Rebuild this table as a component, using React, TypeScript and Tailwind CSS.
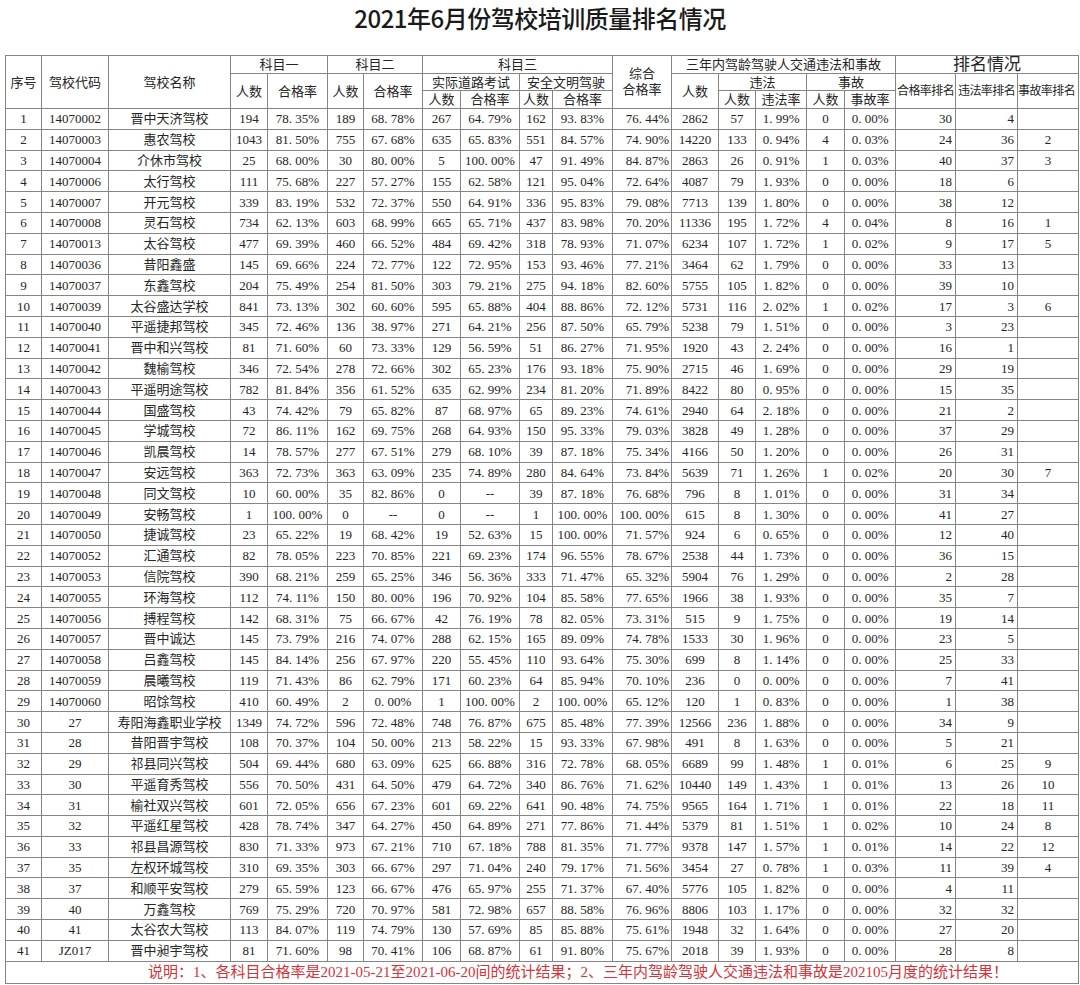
import React from "react";

const raw = `1 14070002 晋中天济驾校 194 78.35% 189 68.78% 267 64.79% 162 93.83% 76.44% 2862 57 1.99% 0 0.00% 30 4 _
2 14070003 惠农驾校 1043 81.50% 755 67.68% 635 65.83% 551 84.57% 74.90% 14220 133 0.94% 4 0.03% 24 36 2
3 14070004 介休市驾校 25 68.00% 30 80.00% 5 100.00% 47 91.49% 84.87% 2863 26 0.91% 1 0.03% 40 37 3
4 14070006 太行驾校 111 75.68% 227 57.27% 155 62.58% 121 95.04% 72.64% 4087 79 1.93% 0 0.00% 18 6 _
5 14070007 开元驾校 339 83.19% 532 72.37% 550 64.91% 336 95.83% 79.08% 7713 139 1.80% 0 0.00% 38 12 _
6 14070008 灵石驾校 734 62.13% 603 68.99% 665 65.71% 437 83.98% 70.20% 11336 195 1.72% 4 0.04% 8 16 1
7 14070013 太谷驾校 477 69.39% 460 66.52% 484 69.42% 318 78.93% 71.07% 6234 107 1.72% 1 0.02% 9 17 5
8 14070036 昔阳鑫盛 145 69.66% 224 72.77% 122 72.95% 153 93.46% 77.21% 3464 62 1.79% 0 0.00% 33 13 _
9 14070037 东鑫驾校 204 75.49% 254 81.50% 303 79.21% 275 94.18% 82.60% 5755 105 1.82% 0 0.00% 39 10 _
10 14070039 太谷盛达学校 841 73.13% 302 60.60% 595 65.88% 404 88.86% 72.12% 5731 116 2.02% 1 0.02% 17 3 6
11 14070040 平遥捷邦驾校 345 72.46% 136 38.97% 271 64.21% 256 87.50% 65.79% 5238 79 1.51% 0 0.00% 3 23 _
12 14070041 晋中和兴驾校 81 71.60% 60 73.33% 129 56.59% 51 86.27% 71.95% 1920 43 2.24% 0 0.00% 16 1 _
13 14070042 魏榆驾校 346 72.54% 278 72.66% 302 65.23% 176 93.18% 75.90% 2715 46 1.69% 0 0.00% 29 19 _
14 14070043 平遥明途驾校 782 81.84% 356 61.52% 635 62.99% 234 81.20% 71.89% 8422 80 0.95% 0 0.00% 15 35 _
15 14070044 国盛驾校 43 74.42% 79 65.82% 87 68.97% 65 89.23% 74.61% 2940 64 2.18% 0 0.00% 21 2 _
16 14070045 学城驾校 72 86.11% 162 69.75% 268 64.93% 150 95.33% 79.03% 3828 49 1.28% 0 0.00% 37 29 _
17 14070046 凯晨驾校 14 78.57% 277 67.51% 279 68.10% 39 87.18% 75.34% 4166 50 1.20% 0 0.00% 26 31 _
18 14070047 安远驾校 363 72.73% 363 63.09% 235 74.89% 280 84.64% 73.84% 5639 71 1.26% 1 0.02% 20 30 7
19 14070048 同文驾校 10 60.00% 35 82.86% 0 -- 39 87.18% 76.68% 796 8 1.01% 0 0.00% 31 34 _
20 14070049 安畅驾校 1 100.00% 0 -- 0 -- 1 100.00% 100.00% 615 8 1.30% 0 0.00% 41 27 _
21 14070050 捷诚驾校 23 65.22% 19 68.42% 19 52.63% 15 100.00% 71.57% 924 6 0.65% 0 0.00% 12 40 _
22 14070052 汇通驾校 82 78.05% 223 70.85% 221 69.23% 174 96.55% 78.67% 2538 44 1.73% 0 0.00% 36 15 _
23 14070053 信院驾校 390 68.21% 259 65.25% 346 56.36% 333 71.47% 65.32% 5904 76 1.29% 0 0.00% 2 28 _
24 14070055 环海驾校 112 74.11% 150 80.00% 196 70.92% 104 85.58% 77.65% 1966 38 1.93% 0 0.00% 35 7 _
25 14070056 搏程驾校 142 68.31% 75 66.67% 42 76.19% 78 82.05% 73.31% 515 9 1.75% 0 0.00% 19 14 _
26 14070057 晋中诚达 145 73.79% 216 74.07% 288 62.15% 165 89.09% 74.78% 1533 30 1.96% 0 0.00% 23 5 _
27 14070058 吕鑫驾校 145 84.14% 256 67.97% 220 55.45% 110 93.64% 75.30% 699 8 1.14% 0 0.00% 25 33 _
28 14070059 晨曦驾校 119 71.43% 86 62.79% 171 60.23% 64 85.94% 70.10% 236 0 0.00% 0 0.00% 7 41 _
29 14070060 昭馀驾校 410 60.49% 2 0.00% 1 100.00% 2 100.00% 65.12% 120 1 0.83% 0 0.00% 1 38 _
30 27 寿阳海鑫职业学校 1349 74.72% 596 72.48% 748 76.87% 675 85.48% 77.39% 12566 236 1.88% 0 0.00% 34 9 _
31 28 昔阳晋宇驾校 108 70.37% 104 50.00% 213 58.22% 15 93.33% 67.98% 491 8 1.63% 0 0.00% 5 21 _
32 29 祁县同兴驾校 504 69.44% 680 63.09% 625 66.88% 316 72.78% 68.05% 6689 99 1.48% 1 0.01% 6 25 9
33 30 平遥育秀驾校 556 70.50% 431 64.50% 479 64.72% 340 86.76% 71.62% 10440 149 1.43% 1 0.01% 13 26 10
34 31 榆社双兴驾校 601 72.05% 656 67.23% 601 69.22% 641 90.48% 74.75% 9565 164 1.71% 1 0.01% 22 18 11
35 32 平遥红星驾校 428 78.74% 347 64.27% 450 64.89% 271 77.86% 71.44% 5379 81 1.51% 1 0.02% 10 24 8
36 33 祁县昌源驾校 830 71.33% 973 67.21% 710 67.18% 788 81.35% 71.77% 9378 147 1.57% 1 0.01% 14 22 12
37 35 左权环城驾校 310 69.35% 303 66.67% 297 71.04% 240 79.17% 71.56% 3454 27 0.78% 1 0.03% 11 39 4
38 37 和顺平安驾校 279 65.59% 123 66.67% 476 65.97% 255 71.37% 67.40% 5776 105 1.82% 0 0.00% 4 11 _
39 40 万鑫驾校 769 75.29% 720 70.97% 581 72.98% 657 88.58% 76.96% 8806 103 1.17% 0 0.00% 32 32 _
40 41 太谷农大驾校 113 84.07% 119 74.79% 130 57.69% 85 85.88% 75.61% 1948 32 1.64% 0 0.00% 27 20 _
41 JZ017 晋中昶宇驾校 81 71.60% 98 70.41% 106 68.87% 61 91.80% 75.67% 2018 39 1.93% 0 0.00% 28 8 _`;

const rows = raw.split("\n").map((l) => l.trim().split(/\s+/).map((c) => (c === "_" ? "" : c)));

const widths = [36, 67, 122, 37, 60, 36, 59, 38, 59, 33, 60, 59, 47, 37, 51, 38, 51, 60, 62, 61];

const fmt = (s: string) => s.replace(/\./, ". ");

const td = "border border-[#858585] p-0 whitespace-nowrap overflow-hidden";

export default function App() {
  return (
    <div
      className="w-[1080px] h-[985px] bg-white text-[#252525] overflow-hidden"
      style={{ fontFamily: '"Liberation Serif", "Noto Sans CJK SC", serif' }}
    >
      <div className="h-[55px] flex justify-center pt-[3px]">
        <div
          className="text-[24px] leading-[30px] font-medium text-[#1a1a1a] tracking-[-0.5px]"
          style={{ fontFamily: '"Noto Sans CJK SC", sans-serif' }}
        >
          2021年6月份驾校培训质量排名情况
        </div>
      </div>
      <table className="ml-[5px] w-[1073px] table-fixed border-collapse border border-[#666] text-[13px] leading-none">
        <colgroup>
          {widths.map((w, i) => (
            <col key={i} style={{ width: w }} />
          ))}
        </colgroup>
        <thead>
          <tr className="h-[18px]">
            <td rowSpan={3} className={td + " text-center text-[13px]"}>序号</td>
            <td rowSpan={3} className={td + " text-center text-[13px]"}>驾校代码</td>
            <td rowSpan={3} className={td + " text-center text-[13px]"}>驾校名称</td>
            <td colSpan={2} className={td + " text-center"}>科目一</td>
            <td colSpan={2} className={td + " text-center"}>科目二</td>
            <td colSpan={4} className={td + " text-center"}>科目三</td>
            <td rowSpan={3} className={td + " text-center leading-[16px]"}>
              综合
              <br />
              合格率
            </td>
            <td colSpan={5} className={td + " text-center"}>三年内驾龄驾驶人交通违法和事故</td>
            <td colSpan={3} className={td + " text-center text-[17px]"}>排名情况</td>
          </tr>
          <tr className="h-[17px]">
            <td rowSpan={2} className={td + " text-center"}>人数</td>
            <td rowSpan={2} className={td + " text-center"}>合格率</td>
            <td rowSpan={2} className={td + " text-center"}>人数</td>
            <td rowSpan={2} className={td + " text-center"}>合格率</td>
            <td colSpan={2} className={td + " text-center"}>实际道路考试</td>
            <td colSpan={2} className={td + " text-center"}>安全文明驾驶</td>
            <td rowSpan={2} className={td + " text-center"}>人数</td>
            <td colSpan={2} className={td + " text-center"}>违法</td>
            <td colSpan={2} className={td + " text-center"}>事故</td>
            <td rowSpan={2} className={td + " text-center text-[12px] tracking-[-0.6px]"}>合格率排名</td>
            <td rowSpan={2} className={td + " text-center text-[12px] tracking-[-0.6px]"}>违法率排名</td>
            <td rowSpan={2} className={td + " text-left text-[12px] tracking-[-0.6px]"}>事故率排名</td>
          </tr>
          <tr className="h-[18px]">
            <td className={td + " text-center"}>人数</td>
            <td className={td + " text-center"}>合格率</td>
            <td className={td + " text-center"}>人数</td>
            <td className={td + " text-center"}>合格率</td>
            <td className={td + " text-center"}>人数</td>
            <td className={td + " text-center"}>违法率</td>
            <td className={td + " text-center"}>人数</td>
            <td className={td + " text-center"}>事故率</td>
          </tr>
        </thead>
        <tbody>
          {rows.map((r, i) => (
            <tr key={i} className="h-[20.8px]">
              {r.map((c, j) => {
                let align = "text-center";
                if (j === 11) align = "text-right pr-[2px]";
                else if (j === 17 || j === 18) align = "text-right pr-[3px]";
                const isPct = c.endsWith("%");
                return (
                  <td key={j} className={td + " " + align}>
                    {isPct ? fmt(c) : c}
                  </td>
                );
              })}
            </tr>
          ))}
          <tr className="h-[22px]">
            <td colSpan={20} className={td + " text-center text-[15px] text-[#d8313a] pl-[72px]"}>
              说明：1、各科目合格率是2021-05-21至2021-06-20间的统计结果；2、三年内驾龄驾驶人交通违法和事故是202105月度的统计结果！
            </td>
          </tr>
        </tbody>
      </table>
    </div>
  );
}
